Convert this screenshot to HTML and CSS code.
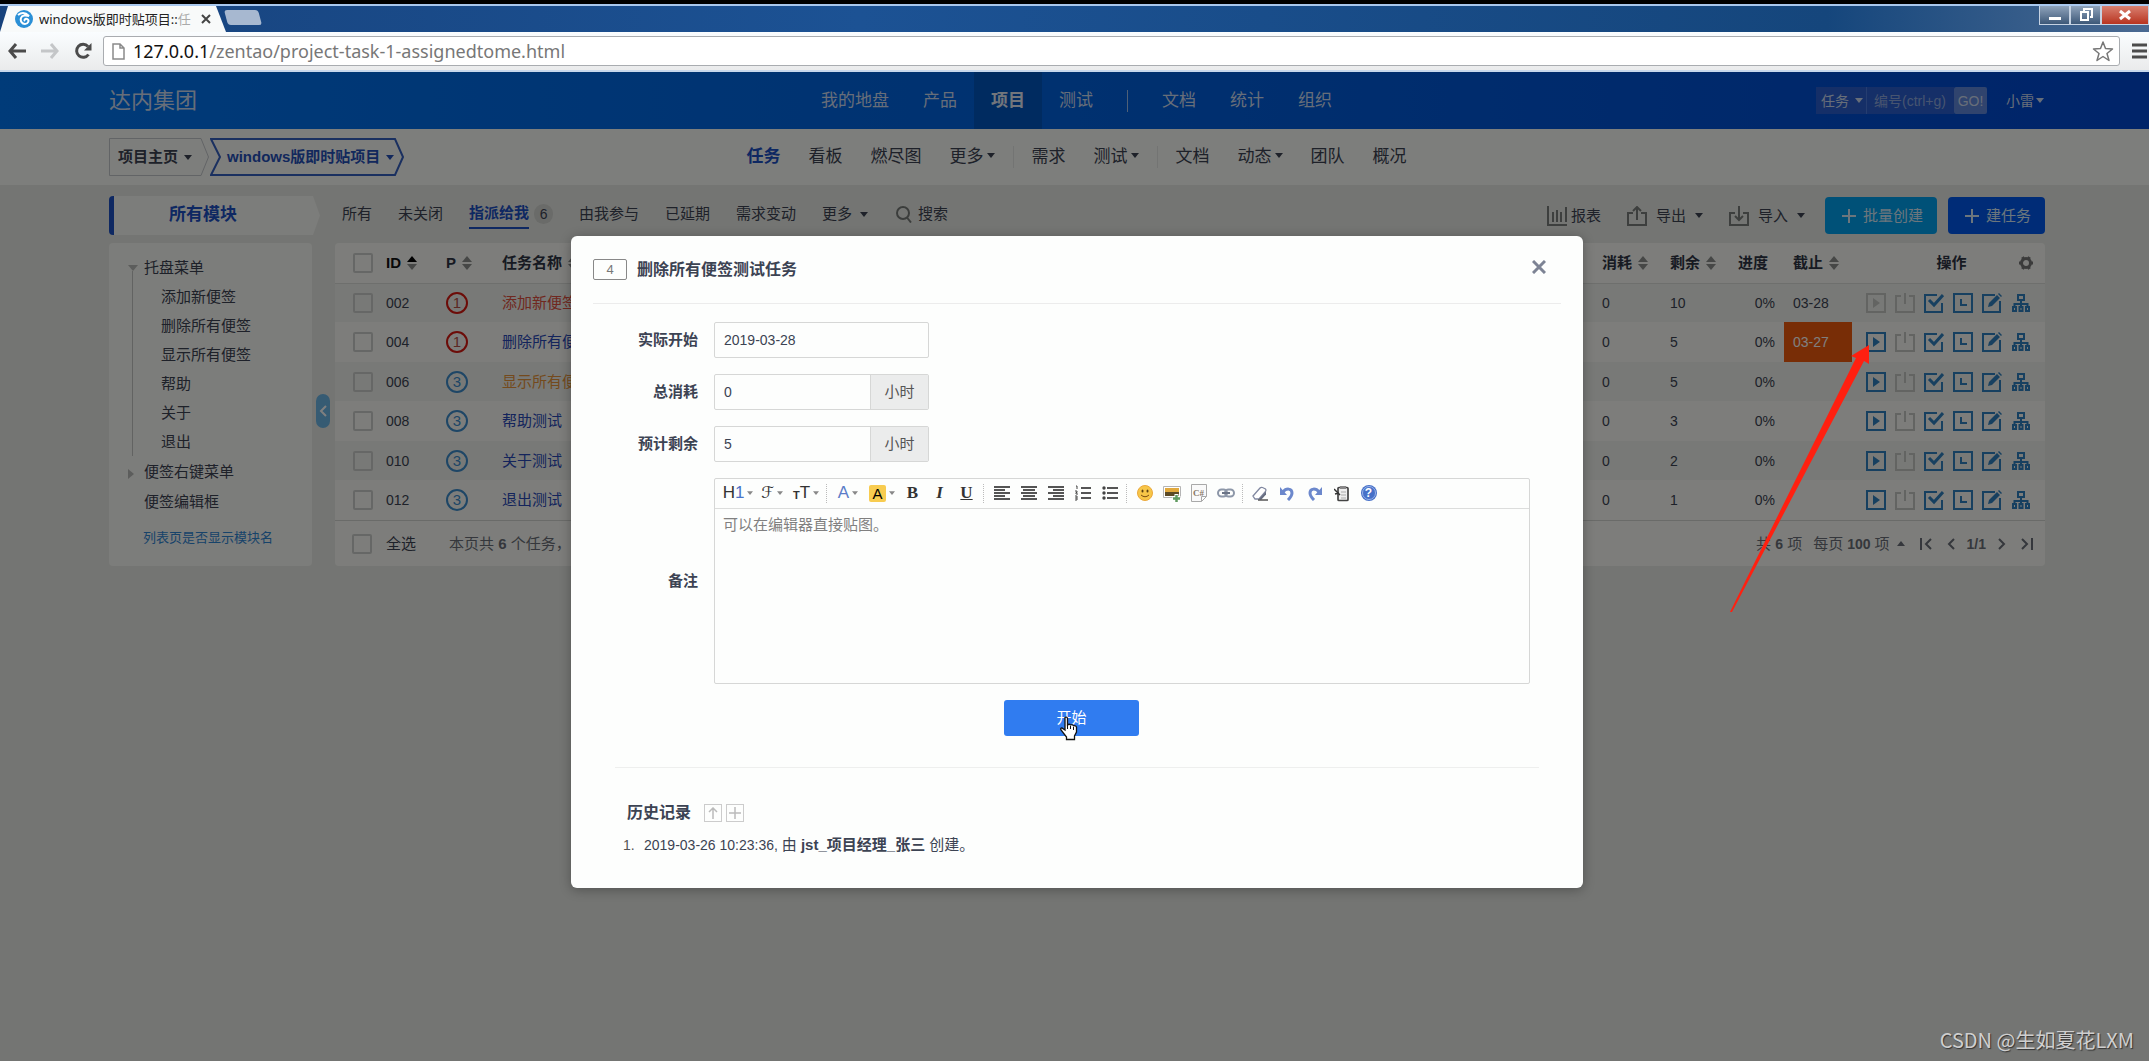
FILE: index.html
```html
<!DOCTYPE html>
<html lang="zh-CN">
<head>
<meta charset="utf-8">
<title>windows版即时贴项目::任务</title>
<link rel="stylesheet" href="styles.css">
</head>
<body>
<svg class="defs" width="0" height="0" aria-hidden="true">
  <symbol id="caret" viewBox="0 0 8 5"><path d="M0 0h8L4 5z" fill="currentColor"/></symbol>
  <symbol id="sort" viewBox="0 0 10 14"><path class="up" d="M0 6L5 0l5 6z" fill="currentColor"/><path d="M0 8h10l-5 6z" fill="#8c8f8c"/></symbol>
  <symbol id="play" viewBox="0 0 20 20"><path d="M1 1h18v18H1z" fill="none" stroke="currentColor" stroke-width="2"/><path d="M7 5l7 5-7 5z" fill="currentColor"/></symbol>
  <symbol id="power" viewBox="0 0 20 20"><path d="M6 3H1v16h18V3h-5M10 0v11" fill="none" stroke="currentColor" stroke-width="2"/></symbol>
  <symbol id="check" viewBox="0 0 20 20"><path d="M13 2H1v17h17v-9" fill="none" stroke="currentColor" stroke-width="2"/><path d="M5 7l5 5 9-10" fill="none" stroke="currentColor" stroke-width="3"/></symbol>
  <symbol id="clock" viewBox="0 0 20 20"><path d="M1 1h18v18H1z" fill="none" stroke="currentColor" stroke-width="2"/><path d="M8 6v6h6" fill="none" stroke="currentColor" stroke-width="2"/></symbol>
  <symbol id="edit" viewBox="0 0 20 20"><path d="M13 2H1v17h17V8" fill="none" stroke="currentColor" stroke-width="2"/><path d="M6 14l1-4 8-8 3 3-8 8zM16 1l1-1 3 3-1 1z" fill="currentColor"/></symbol>
  <symbol id="tree" viewBox="0 0 20 20"><path d="M7 2h6v5H7zM10 7v7M3.500 14v-3h13v3M2 14h3v4H2zM8.500 14h3v4h-3zM15 14h3v4h-3z" fill="none" stroke="currentColor" stroke-width="2"/></symbol>
  <symbol id="plus" viewBox="0 0 14 14"><path d="M7 0v14M0 7h14" stroke="currentColor" stroke-width="2"/></symbol>
</svg>

<header class="browser">
  <div class="tabs">
    <div class="tab">
      <svg width="18" height="18" viewBox="0 0 18 18"><circle cx="9" cy="9" r="9" fill="#2a8fd6"/><path d="M3 5c4-3 8-2 11 1-3-1-7-1-8 2s1 6 4 6 5-4 2-5c-2-.6-3 1-2 2" fill="none" stroke="#fff" stroke-width="2"/></svg>
      <span class="tab-title">windows版即时贴项目::<i>任</i></span>
      <svg class="tab-x" width="10" height="10" viewBox="0 0 10 10"><path d="M1 1l8 8M9 1L1 9" stroke="#444" stroke-width="2"/></svg>
    </div>
    <div class="newtab"></div>
    <div class="winbtns">
      <button aria-label="最小化"><svg width="12" height="14" viewBox="0 0 12 14"><path d="M0 9h12v3H0z" fill="#fff"/></svg></button>
      <button aria-label="还原"><svg width="14" height="14" viewBox="0 0 14 14"><path d="M5 3V1h8v8h-2M2 4h7v8H2z" fill="none" stroke="#fff" stroke-width="2"/></svg></button>
      <button class="close" aria-label="关闭窗口"><svg width="12" height="12" viewBox="0 0 12 12"><path d="M1 2l10 8M11 2L1 10" stroke="#fff" stroke-width="3"/></svg></button>
    </div>
  </div>
  <div class="address">
    <button aria-label="后退"><svg width="18" height="16" viewBox="0 0 18 16"><path d="M8 1L2 8l6 7M2 8h16" fill="none" stroke="#4b4b4b" stroke-width="3"/></svg></button>
    <button aria-label="前进"><svg width="18" height="16" viewBox="0 0 18 16"><path d="M10 1l6 7-6 7M16 8H0" fill="none" stroke="#c4c6c8" stroke-width="3"/></svg></button>
    <button aria-label="刷新"><svg width="18" height="18" viewBox="0 0 18 18"><path d="M14.500 12.500A6.500 6.500 0 1 1 14 4.500" fill="none" stroke="#4b4b4b" stroke-width="3"/><path d="M17.500 1v7.500H10z" fill="#4b4b4b"/></svg></button>
    <div class="url">
      <svg width="13" height="17" viewBox="0 0 13 17"><path d="M1 1h7l4 4v11H1zM8 1v4h4" fill="none" stroke="#8a8a8a" stroke-width="1.500"/></svg>
      <span><b>127.0.0.1</b>/zentao/project-task-1-assignedtome.html</span>
      <svg class="star" width="22" height="21" viewBox="0 0 22 21"><path d="M11 1l2.500 6.500 7 .5-5.500 4.500 2 7-6-4-6 4 2-7L1.500 8l7-.5z" fill="none" stroke="#777" stroke-width="1.500" stroke-linejoin="round"/></svg>
    </div>
    <svg width="15" height="16" viewBox="0 0 15 16"><path d="M0 2h15M0 8h15M0 14h15" stroke="#4b4b4b" stroke-width="3"/></svg>
  </div>
</header>

<div class="app">
  <header class="topbar">
    <a class="brand" href="#">达内集团</a>
    <nav class="mainnav">
      <a href="#">我的地盘</a><a href="#">产品</a><a href="#" class="active">项目</a><a href="#">测试</a>
      <span class="vline"></span>
      <a href="#">文档</a><a href="#">统计</a><a href="#">组织</a>
    </nav>
    <div class="userbar">
      <form class="quick">
        <label class="pick"><select aria-label="搜索类型"><option>任务</option></select><svg width="8" height="5"><use href="#caret"/></svg></label>
        <input type="text" aria-label="编号" placeholder="编号(ctrl+g)">
        <button type="button">GO!</button>
      </form>
      <a class="user" href="#">小雷<svg width="8" height="5"><use href="#caret"/></svg></a>
    </div>
  </header>

  <div class="subbar">
    <div class="crumbs">
      <button class="crumb">
        <svg class="shape" width="100" height="38" viewBox="0 0 100 38"><path d="M.5.5H92l7.500 18.500L92 37.500H.5z" fill="none" stroke="#c4c8cc"/></svg>
        <span>项目主页</span><svg width="8" height="5"><use href="#caret"/></svg></button>
      <button class="crumb current">
        <svg class="shape" width="194" height="38" viewBox="0 0 194 38"><path d="M1 1h184l8 18-8 18H1l9-18z" fill="none" stroke="#3560c0" stroke-width="2"/></svg>
        <span>windows版即时贴项目</span><svg width="8" height="5"><use href="#caret"/></svg></button>
    </div>
    <nav class="subnav">
      <a href="#" class="active">任务</a><a href="#">看板</a><a href="#">燃尽图</a><a href="#">更多<svg width="8" height="5"><use href="#caret"/></svg></a>
      <span class="vline"></span>
      <a href="#">需求</a><a href="#">测试<svg width="8" height="5"><use href="#caret"/></svg></a>
      <span class="vline"></span>
      <a href="#">文档</a><a href="#">动态<svg width="8" height="5"><use href="#caret"/></svg></a><a href="#">团队</a><a href="#">概况</a>
    </nav>
  </div>

  <main class="page">
    <div class="toolbar">
      <div class="allmods">所有模块</div>
      <nav class="filters">
        <a href="#">所有</a><a href="#">未关闭</a><a href="#" class="active"><span>指派给我</span><em>6</em></a><a href="#">由我参与</a><a href="#">已延期</a><a href="#">需求变动</a>
        <a href="#" class="more">更多<svg width="8" height="5"><use href="#caret"/></svg></a>
        <a href="#" class="search"><svg width="16" height="17" viewBox="0 0 16 17"><circle cx="7" cy="7" r="6" fill="none" stroke="#777b78" stroke-width="2"/><path d="M11 11.500l4 5" stroke="#777b78" stroke-width="2"/></svg>搜索</a>
      </nav>
      <div class="tools">
        <a href="#" class="report"><svg width="20" height="20" viewBox="0 0 20 20"><path d="M1 0v19h19M6 6v10M10 4v12M14 6v10M19 1v15" fill="none" stroke="#7b7f7c" stroke-width="2"/></svg>报表</a>
        <a href="#"><svg width="20" height="20" viewBox="0 0 20 20"><path d="M6 7H1v12h18V7h-5M10 14V2M6 5l4-4 4 4" fill="none" stroke="#7b7f7c" stroke-width="2"/></svg>导出<svg width="8" height="5"><use href="#caret"/></svg></a>
        <a href="#"><svg width="20" height="20" viewBox="0 0 20 20"><path d="M6 7H1v12h18V7h-5M10 0v13M6 10l4 4 4-4" fill="none" stroke="#7b7f7c" stroke-width="2"/></svg>导入<svg width="8" height="5"><use href="#caret"/></svg></a>
        <button class="btn cyan"><svg width="14" height="14"><use href="#plus"/></svg>批量创建</button>
        <button class="btn blue"><svg width="14" height="14"><use href="#plus"/></svg>建任务</button>
      </div>
    </div>

    <div class="columns">
      <aside class="sidebar">
        <ul class="tree">
          <li class="open">托盘菜单
            <ul><li>添加新便签</li><li>删除所有便签</li><li>显示所有便签</li><li>帮助</li><li>关于</li><li>退出</li></ul>
          </li>
          <li class="shut">便签右键菜单</li>
          <li>便签编辑框</li>
        </ul>
        <a class="toggle" href="#">列表页是否显示模块名</a>
      </aside>
      <button class="handle" aria-label="收起侧栏"><svg width="8" height="14" viewBox="0 0 8 14"><path d="M7 2L2 7l5 5" fill="none" stroke="#fff" stroke-width="2"/></svg></button>

      <section class="panel">
        <table>
          <colgroup><col class="c-check"><col class="c-id"><col class="c-pri"><col><col class="c-num"><col class="c-num"><col class="c-pct"><col class="c-num"><col class="c-act"></colgroup>
          <thead>
            <tr>
              <th><input type="checkbox" aria-label="全选任务"></th>
              <th class="sorted">ID<svg width="10" height="14"><use href="#sort"/></svg></th>
              <th>P<svg width="10" height="14"><use href="#sort"/></svg></th>
              <th>任务名称<svg width="10" height="14"><use href="#sort"/></svg></th>
              <th>消耗<svg width="10" height="14"><use href="#sort"/></svg></th>
              <th>剩余<svg width="10" height="14"><use href="#sort"/></svg></th>
              <th>进度</th>
              <th>截止<svg width="10" height="14"><use href="#sort"/></svg></th>
              <th><div class="acthead"><span>操作</span><svg class="gear" width="16" height="16" viewBox="0 0 16 16"><circle cx="8" cy="8" r="4.500" fill="none" stroke="currentColor" stroke-width="3"/><path d="M1 8h2M13 8h2M4.500 2l1 1.700M10.500 12.300l1 1.700M11.500 2l-1 1.700M5.500 12.300l-1 1.700" stroke="currentColor" stroke-width="3"/></svg></div></th>
            </tr>
          </thead>
          <tbody>
            <tr><td><input type="checkbox" aria-label="002"></td><td>002</td><td><span class="pri p1">1</span></td><td><a class="red" href="#">添加新便签测试</a></td><td>0</td><td>10</td><td class="pct">0%</td><td>03-28</td>
              <td><div class="acts"><svg class="off"><use href="#play"/></svg><svg class="off"><use href="#power"/></svg><svg><use href="#check"/></svg><svg><use href="#clock"/></svg><svg><use href="#edit"/></svg><svg><use href="#tree"/></svg></div></td></tr>
            <tr><td><input type="checkbox" aria-label="004"></td><td>004</td><td><span class="pri p1">1</span></td><td><a href="#">删除所有便签测试</a></td><td>0</td><td>5</td><td class="pct">0%</td><td class="late">03-27</td>
              <td><div class="acts"><svg><use href="#play"/></svg><svg class="off"><use href="#power"/></svg><svg><use href="#check"/></svg><svg><use href="#clock"/></svg><svg><use href="#edit"/></svg><svg><use href="#tree"/></svg></div></td></tr>
            <tr><td><input type="checkbox" aria-label="006"></td><td>006</td><td><span class="pri">3</span></td><td><a class="orange" href="#">显示所有便签测试</a></td><td>0</td><td>5</td><td class="pct">0%</td><td></td>
              <td><div class="acts"><svg><use href="#play"/></svg><svg class="off"><use href="#power"/></svg><svg><use href="#check"/></svg><svg><use href="#clock"/></svg><svg><use href="#edit"/></svg><svg><use href="#tree"/></svg></div></td></tr>
            <tr><td><input type="checkbox" aria-label="008"></td><td>008</td><td><span class="pri">3</span></td><td><a href="#">帮助测试</a></td><td>0</td><td>3</td><td class="pct">0%</td><td></td>
              <td><div class="acts"><svg><use href="#play"/></svg><svg class="off"><use href="#power"/></svg><svg><use href="#check"/></svg><svg><use href="#clock"/></svg><svg><use href="#edit"/></svg><svg><use href="#tree"/></svg></div></td></tr>
            <tr><td><input type="checkbox" aria-label="010"></td><td>010</td><td><span class="pri">3</span></td><td><a href="#">关于测试</a></td><td>0</td><td>2</td><td class="pct">0%</td><td></td>
              <td><div class="acts"><svg><use href="#play"/></svg><svg class="off"><use href="#power"/></svg><svg><use href="#check"/></svg><svg><use href="#clock"/></svg><svg><use href="#edit"/></svg><svg><use href="#tree"/></svg></div></td></tr>
            <tr><td><input type="checkbox" aria-label="012"></td><td>012</td><td><span class="pri">3</span></td><td><a href="#">退出测试</a></td><td>0</td><td>1</td><td class="pct">0%</td><td></td>
              <td><div class="acts"><svg><use href="#play"/></svg><svg class="off"><use href="#power"/></svg><svg><use href="#check"/></svg><svg><use href="#clock"/></svg><svg><use href="#edit"/></svg><svg><use href="#tree"/></svg></div></td></tr>
          </tbody>
        </table>
        <footer class="tfoot">
          <label class="pickall"><input type="checkbox">全选</label>
          <span class="summary">本页共 <b>6</b> 个任务，未开始</span>
          <div class="pager">
            <span>共 <b>6</b> 项</span>
            <button class="per">每页 <b>100</b> 项<svg class="flip" width="8" height="5"><use href="#caret"/></svg></button>
            <button aria-label="首页"><svg width="12" height="12" viewBox="0 0 12 12"><path d="M1 0v12M11 1L6 6l5 5" fill="none" stroke="currentColor" stroke-width="2"/></svg></button>
            <button aria-label="上一页"><svg width="8" height="12" viewBox="0 0 8 12"><path d="M7 1L2 6l5 5" fill="none" stroke="currentColor" stroke-width="2"/></svg></button>
            <b>1/1</b>
            <button aria-label="下一页"><svg width="8" height="12" viewBox="0 0 8 12"><path d="M1 1l5 5-5 5" fill="none" stroke="currentColor" stroke-width="2"/></svg></button>
            <button aria-label="末页"><svg width="12" height="12" viewBox="0 0 12 12"><path d="M11 0v12M1 1l5 5-5 5" fill="none" stroke="currentColor" stroke-width="2"/></svg></button>
          </div>
        </footer>
      </section>
    </div>
  </main>

  <div class="backdrop">
    <section class="modal" role="dialog" aria-labelledby="dlg-title">
      <header class="mhead">
        <span class="mid">4</span>
        <h2 id="dlg-title">删除所有便签测试任务</h2>
        <button aria-label="关闭"><svg width="14" height="14" viewBox="0 0 14 14"><path d="M1 1l12 12M13 1L1 13" stroke="#7d8394" stroke-width="3"/></svg></button>
      </header>
      <form class="mform">
        <label for="start">实际开始</label>
        <div class="field"><input id="start" type="text" value="2019-03-28"></div>
        <label for="used">总消耗</label>
        <div class="field"><input id="used" type="text" value="0"><span class="unit">小时</span></div>
        <label for="left">预计剩余</label>
        <div class="field"><input id="left" type="text" value="5"><span class="unit">小时</span></div>
        <label for="note">备注</label>
        <div class="editor">
          <div class="etools">
            <button type="button" class="dd">H<i>1</i><svg width="6" height="4"><use href="#caret"/></svg></button>
            <button type="button" class="dd script">ℱ<svg width="6" height="4"><use href="#caret"/></svg></button>
            <button type="button" class="dd"><small>T</small>T<svg width="6" height="4"><use href="#caret"/></svg></button>
            <span class="esep"></span>
            <button type="button" class="dd fore">A<svg width="6" height="4"><use href="#caret"/></svg></button>
            <button type="button" class="dd"><mark>A</mark><svg width="6" height="4"><use href="#caret"/></svg></button>
            <button type="button" class="serif">B</button>
            <button type="button" class="serif it">I</button>
            <button type="button" class="serif un">U</button>
            <span class="esep"></span>
            <button type="button" aria-label="左对齐"><svg width="16" height="14" viewBox="0 0 16 14"><path d="M0 1h16M0 4h11M0 7h16M0 10h11M0 13h16" stroke="#555" stroke-width="2"/></svg></button>
            <button type="button" aria-label="居中"><svg width="16" height="14" viewBox="0 0 16 14"><path d="M0 1h16M2 4h12M0 7h16M2 10h12M0 13h16" stroke="#555" stroke-width="2"/></svg></button>
            <button type="button" aria-label="右对齐"><svg width="16" height="14" viewBox="0 0 16 14"><path d="M0 1h16M5 4h11M0 7h16M5 10h11M0 13h16" stroke="#555" stroke-width="2"/></svg></button>
            <button type="button" aria-label="编号列表"><svg width="16" height="16" viewBox="0 0 16 16"><path d="M6 3h10M6 8h10M6 13h10" stroke="#555" stroke-width="2"/><path d="M1 1h1v3M0 6h2v1.500H1V9h2M0 11h2v4H0M0 13h2" fill="none" stroke="#444"/></svg></button>
            <button type="button" aria-label="项目列表"><svg width="16" height="16" viewBox="0 0 16 16"><path d="M5 3h11M5 8h11M5 13h11" stroke="#555" stroke-width="2"/><circle cx="2" cy="3" r="1.700" fill="#444"/><circle cx="2" cy="8" r="1.700" fill="#444"/><circle cx="2" cy="13" r="1.700" fill="#444"/></svg></button>
            <span class="esep"></span>
            <button type="button" aria-label="表情"><svg width="16" height="16" viewBox="0 0 16 16"><circle cx="8" cy="8" r="7.500" fill="#f7c648" stroke="#eba83a"/><ellipse cx="5.500" cy="6" rx="1" ry="1.600" fill="#5a4010"/><ellipse cx="10.500" cy="6" rx="1" ry="1.600" fill="#5a4010"/><path d="M4 10q4 3.500 8 0" fill="none" stroke="#7a4d10"/></svg></button>
            <button type="button" aria-label="图片"><svg width="18" height="17" viewBox="0 0 18 17"><path d="M.5 1.500h17v11H.5z" fill="#fff" stroke="#b5b5b5"/><path d="M2 3h14v8H2z" fill="#e2a93c"/><path d="M2 7h14v4H2z" fill="#5b4a26"/><path d="M13.500 9v8M9.500 13h8" stroke="#fff" stroke-width="4"/><path d="M13.500 10v7M10 13.500h7" stroke="#5f9a5f" stroke-width="2.500"/></svg></button>
            <button type="button" aria-label="代码" class="code"><svg class="leaf" width="16" height="18" viewBox="0 0 16 18"><path d="M.5.5h15v12l-5 5H.5zM15.500 12.500h-5v5" fill="#fafafa" stroke="#a9a9a9"/></svg><span>C#</span></button>
            <button type="button" aria-label="链接"><svg width="18" height="10" viewBox="0 0 18 10"><rect x="1" y="1.500" width="9" height="7" rx="3.500" fill="none" stroke="#8d97a8" stroke-width="2"/><rect x="8" y="1.500" width="9" height="7" rx="3.500" fill="none" stroke="#8d97a8" stroke-width="2"/><path d="M5 5h8" stroke="#6b7486" stroke-width="2"/></svg></button>
            <span class="esep"></span>
            <button type="button" aria-label="清除格式"><svg width="17" height="15" viewBox="0 0 17 15"><path d="M1 10l7-8q1-1 2.500-.5l3 1.500q1 1 0 2.500L7 13H3z" fill="#fff" stroke="#8088a0" stroke-width="1.300"/><path d="M7 13l7-7.500v3L9 14z" fill="#666d80"/><path d="M6 14h10" stroke="#555" stroke-width="1.500"/></svg></button>
            <button type="button" aria-label="撤销"><svg width="15" height="15" viewBox="0 0 15 15"><path d="M3 6c3-4 9-4 9 1 0 3-2 5-4 7" fill="none" stroke="#6c88cc" stroke-width="3"/><path d="M0 1v8h7z" fill="#6c88cc"/></svg></button>
            <button type="button" aria-label="重做"><svg width="15" height="15" viewBox="0 0 15 15"><path d="M12 6c-3-4-9-4-9 1 0 3 2 5 4 7" fill="none" stroke="#6c88cc" stroke-width="3"/><path d="M15 1v8H8z" fill="#6c88cc"/></svg></button>
            <button type="button" aria-label="源代码"><svg width="15" height="17" viewBox="0 0 15 17"><rect x="4" y="2.500" width="10" height="13" rx="1" fill="#eee" stroke="#444" stroke-width="1.700"/><path d="M6 1h6v3H6z" fill="#888"/><path d="M7 7h5M7 10h5M7 13h5" stroke="#aaa"/><path d="M0 4l6 6M1 9l4-1" stroke="#333" stroke-width="1.500"/></svg></button>
            <button type="button" aria-label="帮助" class="help"><span>?</span></button>
          </div>
          <textarea id="note" placeholder="可以在编辑器直接贴图。"></textarea>
        </div>
        <div class="submit">
          <button type="button">开始</button>
          <svg class="hand" width="20" height="25" viewBox="0 0 20 25"><path d="M6 1.500q2-1 2.500 1V9q2-1.500 3 0 2-1 3 .8 2-.8 3 1.200v5l-2 4v3.500H7.500V21L2 14q-1-2 1-2l3 2z" fill="#fff" stroke="#111" stroke-width="1.300"/><path d="M8.500 9v4M11.500 10v3M14.500 11v3" stroke="#111"/></svg>
        </div>
      </form>
      <section class="history">
        <h3>历史记录
          <button aria-label="倒序"><svg width="12" height="12" viewBox="0 0 12 12"><path d="M6 12V1M2 5l4-4 4 4" fill="none" stroke="#bbb" stroke-width="1.500"/></svg></button>
          <button aria-label="展开"><svg width="12" height="12" viewBox="0 0 12 12"><path d="M6 0v12M0 6h12" fill="none" stroke="#bbb" stroke-width="1.500"/></svg></button>
        </h3>
        <ol><li>2019-03-26 10:23:36, <span>由 <b>jst_项目经理_张三</b> 创建。</span></li></ol>
      </section>
    </section>
  </div>
</div>

<svg class="pointer" width="140" height="270" viewBox="0 0 140 270"><path d="M139 1v19l-5-3L2 268H0L126 14l-5-2z" fill="#ff2010"/></svg>
<div class="watermark">CSDN @生如夏花LXM</div>
</body>
</html>
```
FILE: styles.css
```css
* { box-sizing: border-box; }
body {
  margin: 0;
  min-height: 100vh;
  display: flex;
  flex-direction: column;
  position: relative;
  font: 15px/20px "Liberation Sans", "Noto Sans CJK SC", sans-serif;
  color: #3c4353;
}
a { color: inherit; text-decoration: none; }
button, input, select, textarea { font: inherit; color: inherit; border: 0; padding: 0; margin: 0; background: none; }
ul, ol, h2, h3 { margin: 0; padding: 0; }
ul, ol { list-style: none; }
svg { flex: none; }
i, em { font-style: normal; }
.defs { position: absolute; }

/* browser window frame */
.browser { border-top: 4px solid #000; }
.tabs {
  height: 28px;
  display: flex;
  align-items: flex-end;
  background: linear-gradient(90deg, #17427c, #1c5294 40%, #15467c 85%, #4a6a92);
  border-top: 2px solid #a9c8ee;
}
.tab {
  width: 226px;
  height: 26px;
  display: flex;
  align-items: center;
  padding-left: 15px;
  background: #f8fafa;
  clip-path: polygon(8px 0, 216px 0, 226px 100%, 0 100%);
}
.tab-title { margin-left: 6px; width: 155px; font: 13px/20px "Noto Sans", "Noto Sans CJK SC", sans-serif; color: #222; white-space: nowrap; overflow: hidden; }
.tab-title i { color: #aaa; }
.tab-x { margin-left: 7px; }
.newtab { width: 34px; height: 15px; background: #a7b8d0; border-radius: 3px; transform: skewX(15deg); align-self: center; margin-bottom: 3px; }
.winbtns { display: flex; align-self: flex-start; margin-left: auto; }
.winbtns button {
  width: 31px;
  height: 19px;
  display: flex;
  align-items: center;
  justify-content: center;
  background: linear-gradient(#8fa3bb, #3d5878);
  border: 1px solid #c5d2e2;
  border-top: 0;
}
.winbtns .close { width: 48px; background: linear-gradient(#d98070, #b83420); }
.address {
  height: 40px;
  display: flex;
  align-items: center;
  padding: 0 2px 0 8px;
  background: linear-gradient(#fafdff, #eaebec);
  border-bottom: 2px solid #c8d8ec;
}
.address > button { width: 18px; margin-right: 15px; display: flex; }
.url {
  flex: 1;
  height: 30px;
  display: flex;
  align-items: center;
  gap: 8px;
  margin: 0 12px 0 -4px;
  padding: 0 5px 0 8px;
  background: #fff;
  border: 1px solid #a9acb0;
  border-radius: 3px;
  font: 18px/24px "Noto Sans", sans-serif;
  color: #777;
}
.url b { font-weight: 400; color: #111; }
.url .star { margin-left: auto; }

/* application */
.app { flex: 1; position: relative; background: #e9ebe6; }
.topbar, .subbar {
  display: grid;
  grid-template-columns: 1fr auto 1fr;
  align-items: center;
  padding: 0 105px 0 109px;
}
.topbar { height: 57px; background: linear-gradient(90deg, #0076f2, #0062e0 50%, #0048d2); color: #cfdcf2; }
.brand { font-size: 22px; line-height: 30px; }
.mainnav, .subnav { display: flex; align-items: center; font-size: 17px; }
.mainnav a { padding: 0 17px; line-height: 57px; }
.mainnav .active { background: #0056c0; font-weight: 700; color: #e4ecf8; }
.vline { width: 1px; height: 22px; margin: 0 17px; background: #9fc0ee; }
.userbar { display: flex; justify-content: flex-end; align-items: center; font-size: 14px; }
.quick { display: flex; height: 27px; }
.pick { width: 51px; display: flex; align-items: center; padding-left: 5px; background: #2a5fd0; border-right: 1px solid #4a7ae0; }
.pick select { appearance: none; width: 34px; }
.quick input { width: 87px; padding: 0 7px; background: #2a5fd0; }
.quick input::placeholder { color: #8fa9e0; opacity: 1; }
.quick button { width: 33px; background: #6088dc; border-radius: 2px; }
.user { margin-left: 19px; }
.user svg { margin: 0 0 3px 2px; }

.subbar { height: 56px; background: #fbfcf8; }
.crumbs { display: flex; gap: 1px; }
.crumb { position: relative; height: 38px; display: flex; align-items: center; font-weight: 700; padding: 0 16px 0 9px; gap: 6px; }
.crumb .shape { position: absolute; left: 0; top: 0; }
.crumb.current { color: #2450b8; padding-left: 17px; }
.crumb:first-child { width: 100px; }
.subnav a { padding: 0 14px; }
.subnav svg { margin: 0 0 4px 3px; }
.subnav .active { color: #1c50c4; font-weight: 700; }
.subnav .vline { background: #e6e8e6; margin: 0 4px; }

.page { padding: 11px 104px 0 109px; }
.toolbar { display: flex; align-items: center; height: 39px; }
.allmods {
  width: 211px;
  line-height: 37px;
  padding: 0 28px 2px 0;
  text-align: center;
  font-size: 17px;
  font-weight: 700;
  color: #1c50c4;
  background: #f8faf6;
  border-left: 5px solid #1c50c4;
  border-radius: 4px;
  clip-path: polygon(0 0, 204px 0, 100% 50%, 204px 100%, 0 100%);
}
.filters { display: flex; align-items: center; gap: 26px; margin: 0 0 3px 22px; }
.filters .active { display: flex; align-items: center; gap: 5px; color: #1c50c4; font-weight: 700; }
.filters .active span { line-height: 28px; border-bottom: 2px solid #1c50c4; }
.filters em { width: 19px; border-radius: 10px; background: #d4d6d2; color: #3c4353; font-weight: 400; text-align: center; font-size: 14px; }
.more svg { margin: 0 0 2px 8px; }
.search { display: flex; align-items: center; gap: 6px; margin-left: 2px; }
.tools { display: flex; align-items: center; margin-left: auto; }
.tools a { display: flex; align-items: center; gap: 9px; margin-right: 26px; }
.tools a.report { gap: 4px; }
.tools a:nth-child(3) { margin-right: 20px; }
.btn { height: 37px; display: flex; align-items: center; gap: 7px; padding: 0 14px 0 17px; border-radius: 4px; color: #d8ecfa; }
.cyan { background: #00a2f0; }
.blue { background: #0058ee; margin-left: 11px; }

.columns { display: flex; align-items: stretch; margin-top: 8px; }
.sidebar { width: 203px; padding: 10px 0; background: #f9faf6; border-radius: 4px; }
.tree { padding-left: 35px; line-height: 29px; }
.tree > li { position: relative; margin-bottom: 1px; }
.tree ul { padding-left: 17px; }
.tree > li::before { position: absolute; left: -16px; top: 12px; }
.open::before { content: ""; border: 5px solid transparent; border-top: 6px solid #b8bab8; }
.open::after { content: ""; position: absolute; left: -12px; top: 18px; bottom: 0; width: 1px; background: #c4c6c4; }
.shut::before { content: ""; border: 5px solid transparent; border-left: 6px solid #b8bab8; }
.toggle { display: block; margin: 12px 0 0 34px; font-size: 13px; color: #2f86d4; }
.handle { width: 14px; height: 34px; margin: 12px 5px 0 4px; align-self: center; border-radius: 7px; background: #6cb6e6; display: flex; align-items: center; justify-content: center; }
.panel { flex: 1; background: #fafbf7; border-radius: 4px; }
table { width: 100%; table-layout: fixed; border-collapse: collapse; font-size: 14px; }
th { height: 40px; padding: 0 9px; text-align: left; font-size: 15px; border-bottom: 1px solid #dcdedb; color: #2f3544; white-space: nowrap; }
td { height: 39px; padding: 0 9px; }
tr:nth-child(even) td { height: 40px; }
th:first-child, td:first-child { padding-left: 18px; }
th svg { margin-left: 6px; vertical-align: -2px; color: #8c8f8c; }
.sorted { color: #111; }
.sorted svg { color: #000; }
tbody tr:nth-child(odd) { background: #f1f3ee; }
tbody a { color: #2848b8; font-size: 15px; }
tbody .red { color: #e05040; }
tbody .orange { color: #e8953a; }
.c-check { width: 42px; }
.c-id { width: 60px; }
.c-pri { width: 56px; }
.c-num { width: 68px; }
.c-pct { width: 55px; }
.c-act { width: 193px; }
.pct { text-align: right; }
td.late { background: #f05a0c; color: #fff; }
input[type="checkbox"] { appearance: none; display: block; width: 20px; height: 20px; border: 2px solid #cdcfcc; border-radius: 2px; }
.pri { display: block; width: 22px; line-height: 18px; border: 2px solid #3c8ccc; border-radius: 50%; text-align: center; font-size: 15px; color: #3c8ccc; }
.pri.p1 { border-color: #d81810; color: #b85048; }
.acts { display: flex; gap: 9px; padding-left: 5px; color: #2f80c0; }
.acts svg { width: 20px; height: 20px; }
.acts .off { color: #c6c8c5; }
.acthead { display: flex; align-items: center; }
.acthead span { flex: 1; text-align: center; padding-left: 24px; }
.acthead .gear { margin: 0 2px 0 0; color: #777; }
.tfoot { height: 46px; display: flex; align-items: center; padding: 0 12px 0 17px; border-top: 1px solid #d4d6d3; color: #6a6f78; }
.pickall { display: flex; align-items: center; gap: 14px; color: #3c4353; }
.summary { margin-left: 33px; }
.pager { margin-left: auto; display: flex; align-items: center; gap: 12px; font-size: 15px; }
.pager b { font-size: 14px; }
.pager button { display: flex; align-items: center; gap: 4px; }
.pager .per { margin-left: -1px; }
.pager button + button:not(.per) { margin-left: 3px; }
.flip { margin-left: 3px; transform: scaleY(-1); }

/* dialog */
.backdrop { position: absolute; inset: 0; padding: 164px 104px 0 109px; background: rgba(0, 0, 0, .5); }
.modal { max-width: 1012px; margin: 0 auto; padding: 0 22px 33px; background: #fdfefd; border-radius: 6px; box-shadow: 0 2px 12px rgba(0, 0, 0, .3); }
.mhead { height: 68px; display: flex; align-items: center; gap: 10px; border-bottom: 1px solid #ececec; }
.mid { width: 34px; line-height: 19px; border: 1px solid #888; border-radius: 2px; text-align: center; font-size: 13px; color: #777; }
.mhead h2 { font-size: 16px; line-height: 24px; }
.mhead button { margin: 0 15px 6px auto; display: flex; }
.mform { display: grid; grid-template-columns: 83px 1fr; gap: 16px; align-items: center; margin: 0 22px; padding: 18px 9px 31px 0; border-bottom: 1px solid #eeefee; }
.mform label { text-align: right; font-weight: 700; }
.field { width: 215px; height: 36px; display: flex; font-size: 14px; border: 1px solid #d6d7d6; border-radius: 2px; }
.field input { flex: 1; min-width: 0; padding: 0 9px; }
.unit { width: 58px; line-height: 34px; text-align: center; background: #ebecec; border-left: 1px solid #d6d7d6; font-size: 15px; color: #555; }
.editor { height: 206px; display: flex; flex-direction: column; border: 1px solid #d6d7d6; border-radius: 2px; }
.etools { height: 30px; flex: none; display: flex; align-items: center; padding: 0 0 1px 6px; border-bottom: 1px solid #dcdddc; }
.etools button { width: 27px; height: 24px; display: flex; align-items: center; justify-content: center; color: #333; }
.etools .dd { width: 34px; gap: 3px; font-size: 17px; }
.etools .dd svg { color: #888; }
.etools .dd i { margin-left: -3px; color: #4a74c8; }
.etools .dd small { font-size: 11px; font-weight: 700; margin: 4px -3px 0 0; }
.etools .script { font-family: "DejaVu Sans", sans-serif; font-size: 16px; }
.etools .fore { color: #5b7cc8; }
.etools mark { width: 17px; line-height: 17px; background: #f8cc50; border-radius: 2px; text-align: center; font-size: 15px; }
.etools .serif { font: 700 17px/20px "Liberation Serif", serif; }
.etools .it { font-style: italic; }
.etools .un { text-decoration: underline; }
.etools .code { position: relative; font: 700 9px/12px "Liberation Serif", serif; color: #876; }
.leaf { position: absolute; left: 6px; top: 3px; }
.code span { position: relative; }
.help span { width: 16px; line-height: 16px; border-radius: 50%; background: #4670c8; color: #fff; font-size: 12px; font-weight: 700; outline: 1px solid #9ab4e8; outline-offset: -2px; }
.esep { width: 0; height: 19px; margin: 0 4px 0 3px; border-left: 1px dotted #bbb; }
.editor textarea { flex: 1; resize: none; padding: 6px 8px; font-size: 15px; line-height: 20px; }
.editor textarea::placeholder { color: #808080; opacity: 1; }
.submit { grid-column: 1 / -1; position: relative; display: flex; justify-content: center; }
.submit button { width: 135px; height: 36px; margin-right: 2px; border-radius: 3px; background: #307cf0; color: #fff; }
.hand { position: absolute; left: 50%; top: 16px; margin-left: -14px; }
.history { padding: 33px 0 0 34px; }
.history h3 { display: flex; align-items: center; gap: 4px; font-size: 16px; line-height: 24px; }
.history h3 button { width: 18px; height: 18px; display: flex; align-items: center; justify-content: center; border: 1px solid #ccc; }
.history h3 button:first-of-type { margin-left: 9px; }
.history ol { margin: 10px 0 0 -4px; font-size: 14px; counter-reset: entry; }
.history li { display: flex; align-items: baseline; white-space: pre; }
.history li::before { counter-increment: entry; content: counter(entry) "."; width: 21px; color: #555; }
.history li span { font-size: 15px; }

/* annotation and credit on top of everything */
.pointer { position: absolute; right: 279px; top: 344px; }
.watermark { position: absolute; right: 15px; bottom: 7px; font: 20px/28px "Noto Sans CJK SC", sans-serif; color: #cfcfcf; text-shadow: 1px 1px 1px #333; }
```
